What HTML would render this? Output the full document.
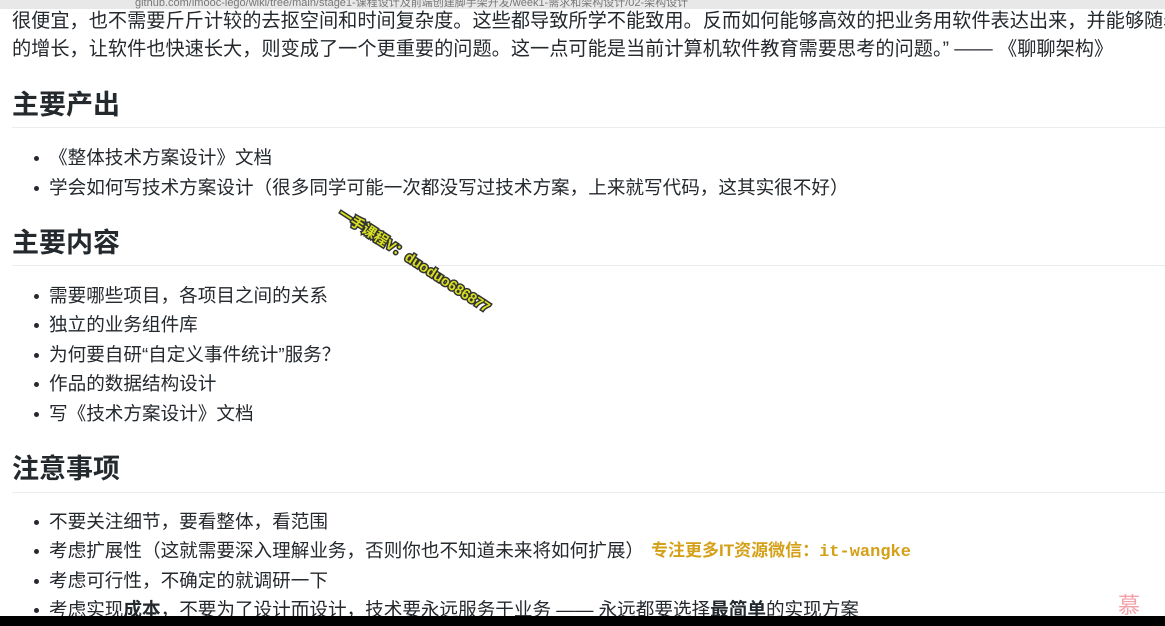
<!DOCTYPE html><html><head><meta charset="utf-8"><style>
body{margin:0;width:1165px;height:626px;overflow:hidden;background:#fff;font-family:"Liberation Sans","Noto Sans CJK SC",sans-serif;color:#24292e;position:relative}
.bar{position:absolute;top:0;left:0;width:1165px;height:9px;background:#e8e8e8;overflow:hidden}
.bar span{position:absolute;left:135px;top:-6px;font-size:11px;color:#777}
.p{position:absolute;left:12px;font-size:19.2px;white-space:nowrap;line-height:22px}
h2{position:absolute;left:12px;margin:0;font-size:27px;font-weight:bold;line-height:30px}
.hr{position:absolute;left:12px;right:0;height:1px;background:#eaecef}
.li{position:absolute;left:49px;font-size:18.6px;white-space:nowrap;line-height:22px}
.li:before{content:"";position:absolute;left:-15px;top:9px;width:5px;height:5px;border-radius:50%;background:#24292e}
.wm{position:absolute;left:340px;top:202px;transform:rotate(33deg);transform-origin:left center;color:#d8e020;font-size:14px;font-weight:bold;-webkit-text-stroke:3px #333;paint-order:stroke fill;white-space:nowrap}
.bot{position:absolute;left:0;top:616px;width:1165px;height:10px;background:#000}
</style></head><body>
<div class="bar"><span>github.com/imooc-lego/wiki/tree/main/stage1-课程设计及前端创建脚手架开发/week1-需求和架构设计/02-架构设计</span></div>
<div class="p" style="top:11px">很便宜，也不需要斤斤计较的去抠空间和时间复杂度。这些都导致所学不能致用。反而如何能够高效的把业务用软件表达出来，并能够随着</div>
<div class="p" style="top:39px">的增长，让软件也快速长大，则变成了一个更重要的问题。这一点可能是当前计算机软件教育需要思考的问题。” —— 《聊聊架构》</div>
<h2 style="top:90px">主要产出</h2><div class="hr" style="top:127px"></div>
<div class="li" style="top:147px">《整体技术方案设计》文档</div>
<div class="li" style="top:177px">学会如何写技术方案设计（很多同学可能一次都没写过技术方案，上来就写代码，这其实很不好）</div>
<h2 style="top:228px">主要内容</h2><div class="hr" style="top:265px"></div>
<div class="li" style="top:285px">需要哪些项目，各项目之间的关系</div>
<div class="li" style="top:314px">独立的业务组件库</div>
<div class="li" style="top:344px">为何要自研“自定义事件统计”服务？</div>
<div class="li" style="top:373px">作品的数据结构设计</div>
<div class="li" style="top:403px">写《技术方案设计》文档</div>
<h2 style="top:454px">注意事项</h2><div class="hr" style="top:492px"></div>
<div class="li" style="top:511px">不要关注细节，要看整体，看范围</div>
<div class="li" style="top:540px">考虑扩展性（这就需要深入理解业务，否则你也不知道未来将如何扩展）</div>
<div class="li" style="top:570px">考虑可行性，不确定的就调研一下</div>
<div class="li" style="top:599px">考虑实现<b>成本</b>，不要为了设计而设计，技术要永远服务于业务 —— 永远都要选择<b>最简单</b>的实现方案</div>
<div style="position:absolute;left:651px;top:536px;color:#d4a017;font-size:17px;font-weight:bold;white-space:nowrap">专注更多IT资源微信：<span style="font-family:'Liberation Mono',monospace">it-wangke</span></div>
<div class="wm">一手课程V：duoduo686877</div>
<div style="position:absolute;left:1118px;top:588px;color:#f3a0a8;font-size:22px;font-family:'Noto Sans CJK SC',sans-serif">慕</div>
<div class="bot"></div>
</body></html>
